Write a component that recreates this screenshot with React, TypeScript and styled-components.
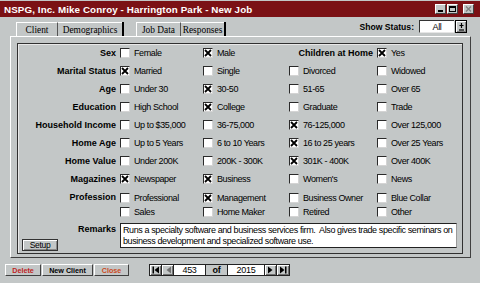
import React from 'react';
import styled, { createGlobalStyle } from 'styled-components';

const GlobalStyle = createGlobalStyle`
  html, body {
    margin: 0;
    padding: 0;
    background: #c3c7c7;
  }
  body {
    font-family: "Liberation Sans", Arial, sans-serif;
    color: #000;
  }
  * {
    box-sizing: border-box;
  }
`;

const Window = styled.div`
  width: 480px;
  height: 283px;
  background: #c3c7c7;
  display: flex;
  flex-direction: column;
  overflow: hidden;
`;

const TitleBar = styled.div`
  height: 16px;
  margin-top: 1px;
  background: #7b1115;
  display: flex;
  align-items: center;
  padding: 0 6px 0 4px;
`;

const Title = styled.div`
  color: #fff;
  font-weight: bold;
  font-size: 9.8px;
  letter-spacing: 0.1px;
  white-space: nowrap;
`;

const WinButtons = styled.div`
  margin-left: auto;
  display: flex;
  gap: 1px;
`;

const WinButton = styled.div<{ $gap?: boolean }>`
  width: 11px;
  height: 10px;
  margin-left: ${p => (p.$gap ? '4px' : '0')};
  background: #c3c7c7;
  border-top: 1px solid #fff;
  border-left: 1px solid #fff;
  border-right: 1px solid #404040;
  border-bottom: 1px solid #404040;
  display: flex;
  align-items: center;
  justify-content: center;
`;

const TopRow = styled.div`
  height: 19px;
  display: flex;
  padding: 0 13px 0 16px;
`;

const Tabs = styled.div`
  display: flex;
  align-self: flex-end;
  gap: 12px;
`;

const TabPair = styled.div`
  display: flex;
  border-right: 2px solid #000;
`;

const Tab = styled.div<{ $w: number }>`
  width: ${p => p.$w}px;
  height: 14px;
  border-top: 1px solid #fff;
  border-left: 1px solid #fff;
  font-family: "Liberation Serif", "Times New Roman", serif;
  font-size: 9.4px;
  display: flex;
  align-items: center;
  justify-content: center;
  & + & {
    border-left: 1px solid #555;
  }
`;

const Status = styled.div`
  margin-left: auto;
  margin-top: 3px;
  display: flex;
  align-items: center;
  height: 13px;
`;

const StatusLabel = styled.span`
  font-weight: bold;
  font-size: 8.6px;
  margin-right: 5px;
`;

const Dropdown = styled.div`
  width: 35px;
  height: 13px;
  background: #fff;
  border-top: 1px solid #333;
  border-left: 1px solid #333;
  border-bottom: 1px solid #e6e6e6;
  font-size: 9px;
  letter-spacing: -0.3px;
  display: flex;
  align-items: center;
  justify-content: center;
`;

const DropButton = styled.div`
  width: 12px;
  height: 13px;
  margin-left: 1px;
  border: 1px solid #000;
  background: #c3c7c7;
  box-shadow: inset 1px 1px #fff, inset -1px -1px #808080;
  display: flex;
  align-items: center;
  justify-content: center;
`;

const TabPage = styled.div`
  margin-left: 10px;
  width: 461px;
  height: 222px;
  border-top: 1px solid #fff;
  border-left: 1px solid #fff;
  border-right: 1px solid #404040;
  border-bottom: 1px solid #404040;
  padding: 6px 7px 3px 6px;
`;

const GroupBox = styled.div`
  height: 211px;
  border: 1px solid #303030;
  box-shadow: inset 1px 1px #e8e8e8;
  display: flex;
  flex-direction: column;
`;

const Row = styled.div<{ $h?: number; $top?: boolean }>`
  display: grid;
  grid-template-columns: 102px 83px 86px 88px 1fr;
  height: ${p => p.$h ?? 18}px;
  align-items: ${p => (p.$top ? 'start' : 'center')};
  padding-top: ${p => (p.$top ? '3px' : '0')};
`;

const Label = styled.div`
  font-weight: bold;
  font-size: 9px;
  line-height: 13px;
  text-align: right;
  padding-right: 4px;
  white-space: nowrap;
`;

const Stack = styled.div`
  display: flex;
  flex-direction: column;
  gap: 1px;
`;

const Item = styled.label`
  display: flex;
  align-items: center;
  gap: 4px;
  height: 13px;
  font-size: 9px;
  letter-spacing: -0.4px;
  white-space: nowrap;
`;

const Box = styled.span`
  width: 10px;
  height: 10px;
  flex: none;
  background: #fff;
  border-top: 1px solid #2a2a2a;
  border-left: 1px solid #2a2a2a;
  border-right: 1px solid #d4d4d4;
  border-bottom: 1px solid #d4d4d4;
  display: flex;
  align-items: center;
  justify-content: center;
`;

const RemarksRow = styled.div`
  display: grid;
  grid-template-columns: 102px 1fr;
  margin-top: 5px;
`;

const LabelCell = styled.div`
  display: flex;
  flex-direction: column;
`;

const SetupButton = styled.div`
  align-self: flex-start;
  margin: 3px 0 0 4px;
  width: 36px;
  height: 12px;
  border: 1px solid #333;
  background: #c3c7c7;
  box-shadow: inset 1px 1px #fff, inset -1px -1px #8a8a8a;
  font-size: 8.5px;
  letter-spacing: -0.3px;
  display: flex;
  align-items: center;
  justify-content: center;
`;

const RemarksBox = styled.div`
  margin-right: 5px;
  height: 25px;
  background: #fff;
  border-top: 1px solid #222;
  border-left: 1px solid #222;
  border-right: 1px solid #9a9a9a;
  border-bottom: 1px solid #222;
  padding: 1px 2px;
  font-size: 9px;
  letter-spacing: -0.4px;
  line-height: 10.5px;
  white-space: nowrap;
  overflow: hidden;
`;

const BottomBar = styled.div`
  display: flex;
  align-items: flex-start;
  padding: 6px 0 0 5px;
`;

const ActionButton = styled.div<{ $w: number; $color?: string }>`
  width: ${p => p.$w}px;
  height: 12px;
  margin-right: 1px;
  background: #c3c7c7;
  border-top: 1px solid #fff;
  border-left: 1px solid #fff;
  border-right: 1px solid #404040;
  border-bottom: 1px solid #404040;
  color: ${p => p.$color ?? '#000'};
  font-weight: bold;
  font-size: 7.2px;
  display: flex;
  align-items: center;
  justify-content: center;
`;

const Nav = styled.div`
  display: flex;
  margin-left: 19px;
  height: 12px;
  border: 1px solid #222;
`;

const NavButton = styled.div`
  width: 12px;
  background: #c3c7c7;
  box-shadow: inset 1px 1px #fff, inset -1px -1px #707070;
  border-right: 1px solid #222;
  display: flex;
  align-items: center;
  justify-content: center;
  &:last-child {
    border-right: none;
  }
`;

const NavField = styled.div<{ $w: number; $gray?: boolean }>`
  width: ${p => p.$w}px;
  background: ${p => (p.$gray ? '#c3c7c7' : '#fff')};
  border-right: 1px solid #222;
  font-size: 9px;
  font-weight: ${p => (p.$gray ? 'bold' : 'normal')};
  letter-spacing: -0.3px;
  display: flex;
  align-items: center;
  justify-content: center;
`;

type Opt = { t: string; c?: boolean };

const rows: { label: string; opts: Opt[] }[] = [
  { label: 'Marital Status', opts: [{ t: 'Married', c: true }, { t: 'Single' }, { t: 'Divorced' }, { t: 'Widowed' }] },
  { label: 'Age', opts: [{ t: 'Under 30' }, { t: '30-50', c: true }, { t: '51-65' }, { t: 'Over 65' }] },
  { label: 'Education', opts: [{ t: 'High School' }, { t: 'College', c: true }, { t: 'Graduate' }, { t: 'Trade' }] },
  { label: 'Household Income', opts: [{ t: 'Up to $35,000' }, { t: '36-75,000' }, { t: '76-125,000', c: true }, { t: 'Over 125,000' }] },
  { label: 'Home Age', opts: [{ t: 'Up to 5 Years' }, { t: '6 to 10 Years' }, { t: '16 to 25 years', c: true }, { t: 'Over 25 Years' }] },
  { label: 'Home Value', opts: [{ t: 'Under 200K' }, { t: '200K - 300K' }, { t: '301K - 400K', c: true }, { t: 'Over 400K' }] },
  { label: 'Magazines', opts: [{ t: 'Newspaper', c: true }, { t: 'Business', c: true }, { t: "Women's" }, { t: 'News' }] },
];

const profession: Opt[][] = [
  [{ t: 'Professional' }, { t: 'Sales' }],
  [{ t: 'Management', c: true }, { t: 'Home Maker' }],
  [{ t: 'Business Owner' }, { t: 'Retired' }],
  [{ t: 'Blue Collar' }, { t: 'Other' }],
];

const Check = ({ t, c }: Opt) => (
  <Item>
    <Box>
      {c && (
        <svg width="8" height="8" viewBox="0 0 8 8">
          <path d="M1 1 L7 7 M7 1 L1 7" stroke="#000" strokeWidth="1.8" />
        </svg>
      )}
    </Box>
    {t}
  </Item>
);

const Tri = ({ dir, bar, color = '#000' }: { dir: 'l' | 'r'; bar?: boolean; color?: string }) => (
  <svg width="8" height="8" viewBox="0 0 8 8">
    {dir === 'l' ? (
      <>
        {bar && <rect x="0.5" y="0.5" width="1.5" height="7" fill={color} />}
        <path d="M7 0.5 L7 7.5 L2.5 4 Z" fill={color} />
      </>
    ) : (
      <>
        <path d="M1 0.5 L1 7.5 L5.5 4 Z" fill={color} />
        {bar && <rect x="6" y="0.5" width="1.5" height="7" fill={color} />}
      </>
    )}
  </svg>
);

const App = () => {
  return (
    <>
      <GlobalStyle />
      <Window>
        <TitleBar>
          <Title>NSPG, Inc. Mike Conroy - Harrington Park - New Job</Title>
          <WinButtons>
            <WinButton>
              <svg width="7" height="6" viewBox="0 0 7 6"><rect x="1" y="4" width="5" height="2" fill="#000" /></svg>
            </WinButton>
            <WinButton>
              <svg width="7" height="6" viewBox="0 0 7 6"><rect x="0.5" y="0.5" width="6" height="5" fill="none" stroke="#000" /><rect x="0.5" y="0.5" width="6" height="1.5" fill="#000" /></svg>
            </WinButton>
            <WinButton $gap>
              <svg width="7" height="6" viewBox="0 0 7 6"><path d="M1 0.5 L6 5.5 M6 0.5 L1 5.5" stroke="#808080" strokeWidth="1.3" /></svg>
            </WinButton>
          </WinButtons>
        </TitleBar>

        <TopRow>
          <Tabs>
            <TabPair>
              <Tab $w={41}>Client</Tab>
              <Tab $w={65}>Demographics</Tab>
            </TabPair>
            <TabPair>
              <Tab $w={44}>Job Data</Tab>
              <Tab $w={44}>Responses</Tab>
            </TabPair>
          </Tabs>
          <Status>
            <StatusLabel>Show Status:</StatusLabel>
            <Dropdown>All</Dropdown>
            <DropButton>
              <svg width="7" height="9" viewBox="0 0 7 9">
                <path d="M3.5 1 L3.5 6 M1.5 3.5 L5.5 3.5" stroke="#000" strokeWidth="1.2" />
                <path d="M1 8 L6 8" stroke="#000" strokeWidth="1.2" />
              </svg>
            </DropButton>
          </Status>
        </TopRow>

        <TabPage>
          <GroupBox>
            <Row>
              <Label>Sex</Label>
              <Check t="Female" />
              <Check t="Male" c />
              <Label>Children at Home</Label>
              <Check t="Yes" c />
            </Row>
            {rows.map(r => (
              <Row key={r.label}>
                <Label>{r.label}</Label>
                {r.opts.map(o => (
                  <Check key={o.t} {...o} />
                ))}
              </Row>
            ))}
            <Row $h={30} $top>
              <Label>Profession</Label>
              {profession.map((col, i) => (
                <Stack key={i}>
                  {col.map(o => (
                    <Check key={o.t} {...o} />
                  ))}
                </Stack>
              ))}
            </Row>
            <RemarksRow>
              <LabelCell>
                <Label>Remarks</Label>
                <SetupButton>Setup</SetupButton>
              </LabelCell>
              <RemarksBox>
                Runs a specialty software and business services firm.&nbsp; Also gives trade specific seminars on
                <br />
                business development and specialized software use.
              </RemarksBox>
            </RemarksRow>
          </GroupBox>
        </TabPage>

        <BottomBar>
          <ActionButton $w={36} $color="#c02424">Delete</ActionButton>
          <ActionButton $w={51}>New Client</ActionButton>
          <ActionButton $w={35} $color="#cc4a22">Close</ActionButton>
          <Nav>
            <NavButton><Tri dir="l" bar /></NavButton>
            <NavButton><Tri dir="l" color="#707070" /></NavButton>
            <NavField $w={32}>453</NavField>
            <NavField $w={22} $gray>of</NavField>
            <NavField $w={37}>2015</NavField>
            <NavButton><Tri dir="r" /></NavButton>
            <NavButton><Tri dir="r" bar /></NavButton>
          </Nav>
        </BottomBar>
      </Window>
    </>
  );
};

export default App;
